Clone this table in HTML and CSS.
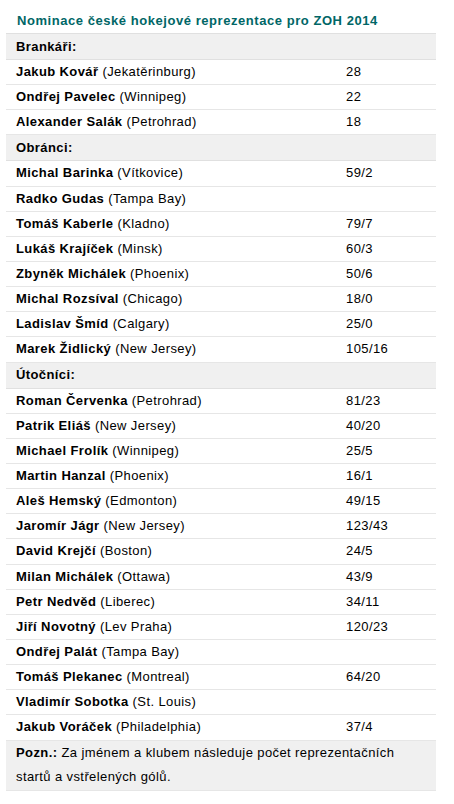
FILE: index.html
```html
<!DOCTYPE html>
<html lang="cs">
<head>
<meta charset="utf-8">
<link rel="stylesheet" href="styles.css">
</head>
<body>
<div class="wrap">
<h2 class="title">Nominace české hokejové reprezentace pro ZOH 2014</h2>
<table class="roster">
<colgroup><col class="c-name"><col class="c-num"></colgroup>
<tbody>
<tr class="group"><td colspan="2"><b>Brankáři:</b></td></tr>
<tr><td><b>Jakub Kovář</b> (Jekatěrinburg)</td><td>28</td></tr>
<tr><td><b>Ondřej Pavelec</b> (Winnipeg)</td><td>22</td></tr>
<tr><td><b>Alexander Salák</b> (Petrohrad)</td><td>18</td></tr>
<tr class="group"><td colspan="2"><b>Obránci:</b></td></tr>
<tr><td><b>Michal Barinka</b> (Vítkovice)</td><td>59/2</td></tr>
<tr><td><b>Radko Gudas</b> (Tampa Bay)</td><td></td></tr>
<tr><td><b>Tomáš Kaberle</b> (Kladno)</td><td>79/7</td></tr>
<tr><td><b>Lukáš Krajíček</b> (Minsk)</td><td>60/3</td></tr>
<tr><td><b>Zbyněk Michálek</b> (Phoenix)</td><td>50/6</td></tr>
<tr><td><b>Michal Rozsíval</b> (Chicago)</td><td>18/0</td></tr>
<tr><td><b>Ladislav Šmíd</b> (Calgary)</td><td>25/0</td></tr>
<tr><td><b>Marek Židlický</b> (New Jersey)</td><td>105/16</td></tr>
<tr class="group"><td colspan="2"><b>Útočníci:</b></td></tr>
<tr><td><b>Roman Červenka</b> (Petrohrad)</td><td>81/23</td></tr>
<tr><td><b>Patrik Eliáš</b> (New Jersey)</td><td>40/20</td></tr>
<tr><td><b>Michael Frolík</b> (Winnipeg)</td><td>25/5</td></tr>
<tr><td><b>Martin Hanzal</b> (Phoenix)</td><td>16/1</td></tr>
<tr><td><b>Aleš Hemský</b> (Edmonton)</td><td>49/15</td></tr>
<tr><td><b>Jaromír Jágr</b> (New Jersey)</td><td>123/43</td></tr>
<tr><td><b>David Krejčí</b> (Boston)</td><td>24/5</td></tr>
<tr><td><b>Milan Michálek</b> (Ottawa)</td><td>43/9</td></tr>
<tr><td><b>Petr Nedvěd</b> (Liberec)</td><td>34/11</td></tr>
<tr><td><b>Jiří Novotný</b> (Lev Praha)</td><td>120/23</td></tr>
<tr><td><b>Ondřej Palát</b> (Tampa Bay)</td><td></td></tr>
<tr><td><b>Tomáš Plekanec</b> (Montreal)</td><td>64/20</td></tr>
<tr><td><b>Vladimír Sobotka</b> (St. Louis)</td><td></td></tr>
<tr><td><b>Jakub Voráček</b> (Philadelphia)</td><td>37/4</td></tr>
<tr class="note"><td colspan="2"><b>Pozn.:</b> Za jménem a klubem následuje počet reprezentačních startů a vstřelených gólů.</td></tr>
</tbody>
</table>
</div>
</body>
</html>
```

FILE: styles.css
```css
html, body {
  margin: 0;
  padding: 0;
  background: #ffffff;
}
body {
  font-family: "Liberation Sans", Arial, sans-serif;
  font-size: 13px;
  color: #000000;
  letter-spacing: 0.4px;
}
.wrap {
  width: 430px;
  padding: 10px 0 0 6px;
}
.title {
  margin: 0 0 0 11px;
  font-size: 13px;
  font-weight: bold;
  color: #006666;
  line-height: 22px;
  letter-spacing: 0.55px;
}
.roster {
  width: 430px;
  border-collapse: collapse;
  margin-top: 1px;
  table-layout: fixed;
}
.c-name {
  width: 330px;
}
.c-num {
  width: 100px;
}
.roster td {
  height: 24.15px;
  padding: 0 10px;
  border-bottom: 1px solid #e6e6e6;
  vertical-align: middle;
  line-height: 16px;
}
.roster .group td {
  background: #f0f0f0;
  border-top: 1px solid #e0e0e0;
  border-bottom: 1px solid #e0e0e0;
  height: 25px;
}
.roster .note td {
  background: #f0f0f0;
  line-height: 24px;
  padding: 0 20px 1px 10px;
  border-bottom: 1px solid #e6e6e6;
}
```
